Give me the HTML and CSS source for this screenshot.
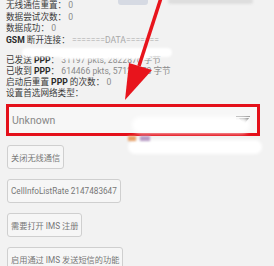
FILE: index.html
```html
<!DOCTYPE html>
<html lang="zh">
<head>
<meta charset="utf-8">
<link rel="stylesheet" href="styles.css">
</head>
<body>
<div class="screen">
  <div class="info">
    <div class="row"><span class="lbl">无线通信重置：</span> <span class="val">0</span></div>
    <div class="row"><span class="lbl">数据尝试次数：</span> <span class="val">0</span></div>
    <div class="row"><span class="lbl">数据成功：</span> <span class="val">0</span></div>
    <div class="row"><span class="lbl"><b>GSM</b> 断开连接：</span> <span class="val light">=======DATA=======</span></div>
    <div class="row gap"><span class="lbl">已发送 <b>PPP</b>：</span> <span class="val">31197 pkts, 2822876 字节</span></div>
    <div class="row"><span class="lbl">已收到 <b>PPP</b>：</span> <span class="val">614466 pkts, 57123458 字节</span></div>
    <div class="row"><span class="lbl">启动后重置 <b>PPP</b> 的次数：</span> <span class="val">0</span></div>
    <div class="row"><span class="lbl">设置首选网络类型：</span></div>
  </div>

  <div class="spinner">
    <span class="spin-text">Unknown</span>
    <svg class="spin-icon" width="14" height="10" viewBox="0 0 14 10">
      <line x1="0" y1="1.5" x2="14" y2="1.5" stroke="#9a9a9a" stroke-width="1"/>
      <line x1="0" y1="4" x2="5" y2="4" stroke="#b5b5b5" stroke-width="1"/>
      <polygon points="3,3 13,3 8,9.5" fill="#6f6f6f"/>
    </svg>
  </div>

  <div class="buttons">
    <button class="btn">关闭无线通信</button>
    <button class="btn">CellInfoListRate 2147483647</button>
    <button class="btn">需要打开 IMS 注册</button>
    <button class="btn">启用通过 IMS 发送短信的功能</button>
  </div>

  <div class="wm wm-top-block"></div>
  <div class="wm wm-top-text"></div>
  <div class="wm wm-band"></div>
  <div class="wm wm-band2"></div>
  <div class="wm wm-box"></div>
  <div class="wm wm-below"></div>
  <div class="wm wm-orange"></div>
  <div class="wm wm-purple"></div>

  <svg class="arrow" width="274" height="266" viewBox="0 0 274 266">
    <line x1="161" y1="-2" x2="139" y2="66" stroke="#e8141c" stroke-width="3.5"/>
    <polygon points="125,100 129,63 152,70" fill="#e8141c"/>
  </svg>
</div>
</body>
</html>
```

FILE: styles.css
```css
html, body {
  margin: 0;
  padding: 0;
  background: #f2f2f2;
}

.screen {
  position: relative;
  width: 274px;
  height: 266px;
  overflow: hidden;
  font-family: Roboto, "Noto Sans CJK SC", sans-serif;
  background: #f2f2f2;
}

.info {
  padding: 0 0 0 6px;
  font-size: 8.6px;
  line-height: 11.5px;
}

.row {
  white-space: nowrap;
}

.row.gap {
  margin-top: 9px;
  line-height: 11px;
}

.row.gap ~ .row {
  line-height: 11px;
}

.lbl {
  color: #3a3a3a;
}

.lbl b {
  font-weight: 700;
  color: #2a2a2a;
}

.val {
  color: #8a8a8a;
}

.val.light {
  color: #a8a8a8;
}

.spinner {
  margin: 5px 14px 0 6px;
  height: 26px;
  border: 3px solid #e4101a;
  background: #f7f7f7;
  display: flex;
  align-items: center;
  justify-content: space-between;
  padding: 0 7px 0 3px;
}

.spin-text {
  font-size: 10.5px;
  color: #888;
}

.spin-icon {
  display: block;
}

.buttons {
  display: flex;
  flex-direction: column;
  align-items: flex-start;
  gap: 10px;
  padding: 9px 0 0 7px;
}

.btn {
  height: 24px;
  margin: 0;
  padding: 0 3px;
  border: 1px solid #cfcfcf;
  border-radius: 3px;
  background: #f6f6f6;
  font-family: Roboto, "Noto Sans CJK SC", sans-serif;
  font-size: 8.2px;
  color: #777;
  white-space: nowrap;
}

.wm {
  position: absolute;
}

.wm-top-block {
  left: 118px;
  top: -3px;
  width: 30px;
  height: 8px;
  border-radius: 3px;
  background: #d6dae3;
}

.wm-top-text {
  left: 168px;
  top: -2px;
  width: 85px;
  height: 6px;
  border-radius: 3px;
  background: #dedede;
  filter: blur(1px);
}

.wm-band {
  left: 22px;
  top: 48px;
  width: 150px;
  height: 9px;
  border-radius: 5px;
  background: #ffffff;
  filter: blur(1.2px);
}

.wm-band2 {
  left: 60px;
  top: 53px;
  width: 90px;
  height: 6px;
  border-radius: 3px;
  background: #ffffff;
  filter: blur(1px);
}

.wm-box {
  left: 132px;
  top: 117px;
  width: 118px;
  height: 16px;
  border-radius: 8px;
  background: #ffffff;
  filter: blur(2px);
}

.wm-below {
  left: 128px;
  top: 140px;
  width: 134px;
  height: 14px;
  border-radius: 7px;
  background: #ffffff;
  filter: blur(1.5px);
}

.wm-orange {
  left: 128px;
  top: 136px;
  width: 8px;
  height: 5px;
  background: #e9a065;
  filter: blur(1px);
}

.wm-purple {
  left: 140px;
  top: 136px;
  width: 10px;
  height: 5px;
  background: #b79ac5;
  filter: blur(1px);
}

.arrow {
  position: absolute;
  left: 0;
  top: 0;
  pointer-events: none;
}
```
